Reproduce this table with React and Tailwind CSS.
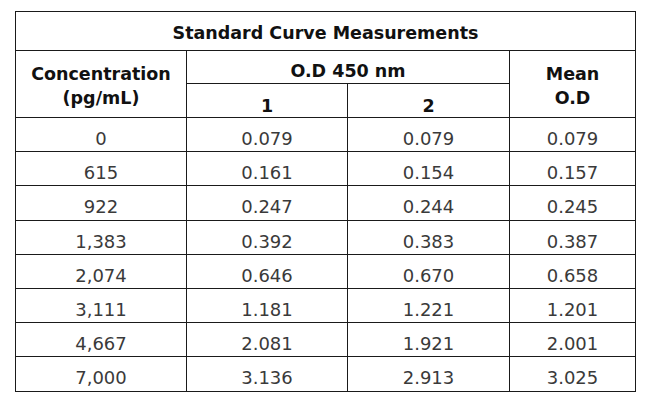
import React from "react";

const rows = [
  ["0", "0.079", "0.079", "0.079"],
  ["615", "0.161", "0.154", "0.157"],
  ["922", "0.247", "0.244", "0.245"],
  ["1,383", "0.392", "0.383", "0.387"],
  ["2,074", "0.646", "0.670", "0.658"],
  ["3,111", "1.181", "1.221", "1.201"],
  ["4,667", "2.081", "1.921", "2.001"],
  ["7,000", "3.136", "2.913", "3.025"],
];

export default function App() {
  return (
    <div className="w-[650px] h-[401px] bg-white pt-[11px] pl-[15px]" style={{ fontFamily: '"DejaVu Sans", sans-serif' }}>
      <table className="w-[620px] table-fixed border-collapse text-[18px] text-[#3a3a3a]">
        <colgroup>
          <col className="w-[171px]" />
          <col className="w-[161px]" />
          <col className="w-[162px]" />
          <col className="w-[126px]" />
        </colgroup>
        <thead className="font-bold text-[#111] text-[17.5px]">
          <tr className="h-[39px]">
            <th colSpan={4} className="border border-[#1a1a1a] p-0 pt-[4px] leading-[22px] align-middle">Standard Curve Measurements</th>
          </tr>
          <tr className="h-[33px]">
            <th rowSpan={2} className="border border-[#1a1a1a] p-0 pt-[3px] leading-[24px] align-middle">
              Concentration
              <br />
              (pg/mL)
            </th>
            <th colSpan={2} className="border border-[#1a1a1a] p-0 pt-[7px] leading-[20px] align-middle">O.D 450 nm</th>
            <th rowSpan={2} className="border border-[#1a1a1a] p-0 pt-[3px] leading-[24px] align-middle">
              Mean
              <br />
              O.D
            </th>
          </tr>
          <tr className="h-[34px]">
            <th className="border border-[#1a1a1a] p-0 pt-[11px] leading-[20px] align-middle">1</th>
            <th className="border border-[#1a1a1a] p-0 pt-[11px] leading-[20px] align-middle">2</th>
          </tr>
        </thead>
        <tbody>
          {rows.map((r, i) => (
            <tr key={i} className="h-[34.2px]">
              {r.map((c, j) => (
                <td key={j} className="border border-[#1a1a1a] p-0 pt-[9px] leading-[20px] text-center align-middle">
                  {c}
                </td>
              ))}
            </tr>
          ))}
        </tbody>
      </table>
    </div>
  );
}
